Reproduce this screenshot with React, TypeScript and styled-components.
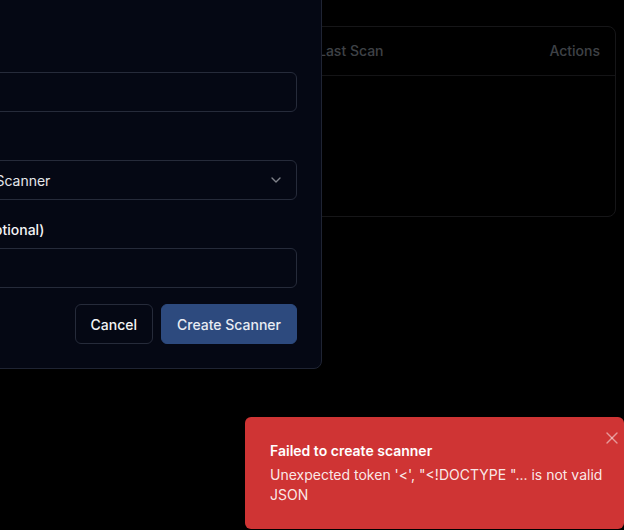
import React from "react";
import styled, { createGlobalStyle } from "styled-components";
import { ChevronDown, X } from "lucide-react";

const Global = createGlobalStyle`
  * { box-sizing: border-box; }
  html, body { margin: 0; padding: 0; background: #000; }
  body {
    font-family: Inter, "Noto Sans", "Liberation Sans", sans-serif;
    color: #f9fafb;
    -webkit-font-smoothing: antialiased;
  }
`;

const Page = styled.main`
  padding: 26px 8px 0 8px;
  min-height: 530px;
`;

const Card = styled.section`
  border: 1px solid #38383d;
  border-radius: 8px;
  height: 191px;
  overflow: hidden;
`;

const HeadRow = styled.div`
  display: grid;
  grid-template-columns: 146px 148px 1fr auto;
  align-items: center;
  height: 49px;
  padding: 0 15px 2px 15px;
  border-bottom: 1px solid #333338;
`;

const HeadCell = styled.div<{ $right?: boolean }>`
  font-size: 14px;
  font-weight: 500;
  color: #9ca3af;
  text-align: ${(p) => (p.$right ? "right" : "left")};
`;

const Overlay = styled.div`
  position: fixed;
  inset: 0;
  background: rgba(0, 0, 0, 0.6);
`;

const Dialog = styled.div`
  position: fixed;
  left: -111px;
  bottom: 161px;
  width: 433px;
  background: #050814;
  border: 1px solid #1f2433;
  border-radius: 8px;
  padding: 24px;
  display: flex;
  flex-direction: column;
  gap: 16px;
`;

const Header = styled.div`
  display: flex;
  flex-direction: column;
  gap: 6px;
  margin-bottom: 32px;
`;

const Title = styled.h2`
  margin: 0;
  font-size: 18px;
  line-height: 28px;
  font-weight: 600;
  color: #f9fafb;
`;

const Form = styled.form`
  display: flex;
  flex-direction: column;
  gap: 20px;
`;

const Field = styled.div`
  display: flex;
  flex-direction: column;
  gap: 8px;
`;

const Label = styled.label`
  font-size: 14px;
  line-height: 20px;
  font-weight: 500;
  color: #f3f4f6;
`;

const Input = styled.input`
  height: 40px;
  width: 100%;
  border: 1px solid #262b3a;
  border-radius: 6px;
  background: #050814;
  padding: 0 12px;
  font: inherit;
  font-size: 14px;
  color: #e5e7eb;
  outline: none;
  &::placeholder { color: #6b7280; }
`;

const SelectBox = styled.div`
  height: 40px;
  border: 1px solid #262b3a;
  border-radius: 6px;
  background: #050814;
  padding: 0 12px;
  display: flex;
  align-items: center;
  justify-content: space-between;
  font-size: 14px;
  color: #e5e7eb;
  svg { opacity: 0.55; color: #e5e7eb; }
`;

const Footer = styled.div`
  display: flex;
  justify-content: flex-end;
  gap: 8px;
  margin-top: -4px;
`;

const Button = styled.button<{ $primary?: boolean }>`
  height: 40px;
  padding: 0 15px;
  border-radius: 6px;
  font: inherit;
  font-size: 14px;
  font-weight: 500;
  cursor: pointer;
  border: 1px solid ${(p) => (p.$primary ? "#2d4a7e" : "#262b3a")};
  background: ${(p) => (p.$primary ? "#2d4a7e" : "#050814")};
  color: ${(p) => (p.$primary ? "#e8ecf3" : "#f3f4f6")};
`;

const Toast = styled.div`
  position: fixed;
  right: 0;
  bottom: 1px;
  width: 379px;
  background: #cf3434;
  border-radius: 6px;
  padding: 24px 18px 24px 25px;
  display: flex;
  flex-direction: column;
  gap: 4px;
`;

const ToastTitle = styled.div`
  font-size: 14px;
  line-height: 20px;
  font-weight: 600;
  color: #fff;
`;

const ToastText = styled.div`
  font-size: 14px;
  line-height: 20px;
  color: rgba(255, 255, 255, 0.9);
`;

const Close = styled.button`
  position: absolute;
  top: 9px;
  right: 0;
  background: none;
  border: none;
  padding: 2px;
  color: rgba(255, 255, 255, 0.5);
  display: flex;
`;

export default function App() {
  return (
    <>
      <Global />
      <Page>
        <Card>
          <HeadRow>
            <HeadCell>Name</HeadCell>
            <HeadCell>Type</HeadCell>
            <HeadCell>Last Scan</HeadCell>
            <HeadCell $right>Actions</HeadCell>
          </HeadRow>
        </Card>
      </Page>
      <Overlay />
      <Dialog role="dialog">
        <Header>
          <Title>Add Scanner</Title>
        </Header>
        <Form onSubmit={(e) => e.preventDefault()}>
          <Field>
            <Label>Name</Label>
            <Input />
          </Field>
          <Field>
            <Label>Type</Label>
            <SelectBox>
              <span>Container Scanner</span>
              <ChevronDown size={16} strokeWidth={2} />
            </SelectBox>
          </Field>
          <Field>
            <Label>Schedule (optional)</Label>
            <Input />
          </Field>
          <Footer>
            <Button type="button">Cancel</Button>
            <Button type="submit" $primary>
              Create Scanner
            </Button>
          </Footer>
        </Form>
      </Dialog>
      <Toast>
        <ToastTitle>Failed to create scanner</ToastTitle>
        <ToastText>
          Unexpected token '&lt;', "&lt;!DOCTYPE "... is not valid JSON
        </ToastText>
        <Close aria-label="Close">
          <X size={20} strokeWidth={1.6} />
        </Close>
      </Toast>
    </>
  );
}
